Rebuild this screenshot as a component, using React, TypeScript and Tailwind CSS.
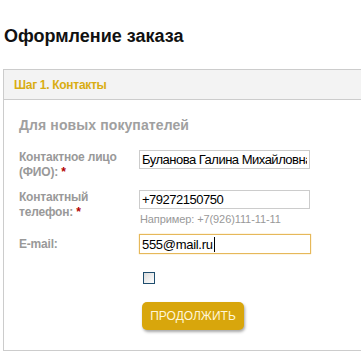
import React from 'react';

const Field: React.FC<{ label: React.ReactNode; children: React.ReactNode; className?: string }> = ({ label, children, className }) => (
  <div className={`flex ${className ?? ''}`}>
    <div className="w-[120px] shrink-0 text-[12px] font-bold leading-[15px] tracking-[-0.2px] text-[#999999]">{label}</div>
    <div>{children}</div>
  </div>
);

const Req = () => <span className="text-[#b30000]"> *</span>;

const inputCls =
  'block h-[19px] w-[171px] border border-[#cccccc] px-[2px] text-[13px] leading-[17px] tracking-[-0.5px] text-black outline-none';

export default function App() {
  return (
    <div className="h-[354px] w-[361px] overflow-hidden bg-white font-['Liberation_Sans',Arial,sans-serif]">
      <h1 className="pl-[4px] pt-[25px] text-[18px] font-bold leading-[22px] text-[#111111]">Оформление заказа</h1>

      <div className="ml-[3px] mt-[22px] w-[420px] border border-[#cccccc]">
        <div className="flex h-[30px] items-center border-b border-[#cccccc] bg-[#f3f3f3] pl-[10px]">
          <span className="text-[12px] font-bold tracking-[-0.3px] text-[#d9ad12]">Шаг 1. Контакты</span>
        </div>

        <div className="pb-[20px] pl-[15px] pt-[17px]">
          <div className="text-[14px] font-bold leading-[16px] tracking-[0.1px] text-[#a0a0a0]">Для новых покупателей</div>

          <Field className="mt-[17px]" label={<>Контактное лицо<br />(ФИО):<Req /></>}>
            <input readOnly value="Буланова Галина Михайловна" className={inputCls} />
          </Field>

          <Field className="mt-[10px]" label={<>Контактный<br />телефон:<Req /></>}>
            <input readOnly value="+79272150750" className={inputCls} />
            <div className="mt-[4px] pl-[1px] text-[11px] leading-[13px] tracking-[-0.1px] text-[#999999]">Например: +7(926)111-11-11</div>
          </Field>

          <Field className="mt-[8px]" label={<div className="pt-[3px]">E-mail:</div>}>
            <div className="flex h-[20px] w-[172px] items-center border border-[#e6b85a] px-[2px] text-[13px] leading-[17px] tracking-[-0.3px] text-black shadow-[0_0_1px_#f0c060]">
              555@mail.ru<span className="ml-[1px] inline-block h-[15px] w-[1px] bg-black" />
            </div>
            <div className="ml-[4px] mt-[18px] h-[12px] w-[12px] border border-[#1f4e6e] bg-gradient-to-br from-[#dcdcdc] to-[#ffffff]" />
            <button className="ml-[3px] mt-[18px] flex h-[28px] w-[102px] items-center justify-center rounded-[5px] bg-[#d8a60c] text-[12px] text-[#fff6d8] shadow-[1px_2px_3px_rgba(0,0,0,0.35)]">
              ПРОДОЛЖИТЬ
            </button>
          </Field>
        </div>
      </div>
    </div>
  );
}
